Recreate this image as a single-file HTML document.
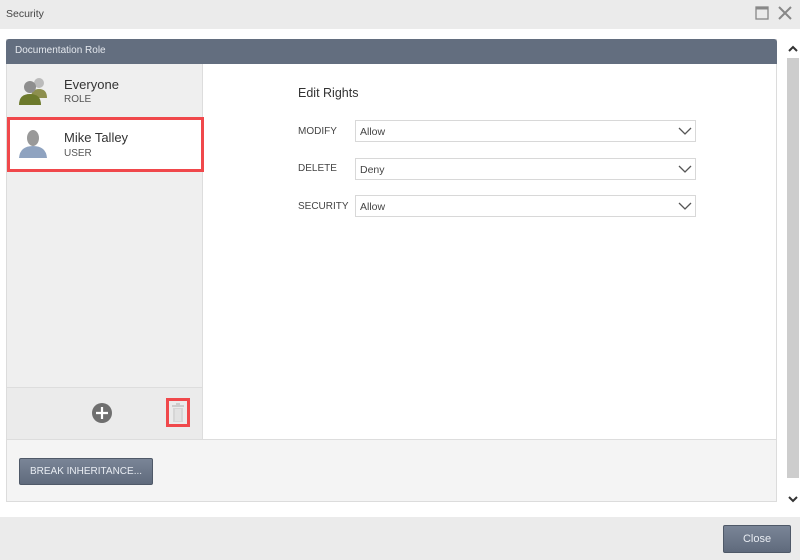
<!DOCTYPE html>
<html><head><style>
*{box-sizing:border-box;margin:0;padding:0}
body{width:800px;height:560px;background:#ebebeb;font-family:"Liberation Sans",sans-serif;position:relative;overflow:hidden;color:#333}
.a{position:absolute}
.sel{position:absolute;left:355px;width:341px;height:22px;border:1px solid #d8d8d8;background:#fff;font-size:10.5px;padding:5px 4px;color:#444}
.sel svg{position:absolute;right:3px;top:5px}
.lbl{position:absolute;left:298px;font-size:10px;color:#444}
</style></head><body>
<div class="a" style="left:6px;top:8px;font-size:10.5px;color:#444">Security</div>
<svg class="a" style="left:755px;top:6px" width="14" height="14"><rect x="1" y="1" width="12" height="12" fill="none" stroke="#888" stroke-width="1.3"/><rect x="1" y="1" width="12" height="2.5" fill="#888"/></svg>
<svg class="a" style="left:777px;top:5px" width="16" height="16"><path d="M2 2L14 14M14 2L2 14" stroke="#888" stroke-width="2"/></svg>
<div class="a" style="left:0;top:29px;width:786px;height:488px;background:#fff"></div>
<div class="a" style="left:786px;top:29px;width:14px;height:488px;background:#fff"></div>
<svg class="a" style="left:786px;top:44px" width="14" height="10"><path d="M3 7L7 3L11 7" stroke="#333" stroke-width="2" fill="none"/></svg>
<div class="a" style="left:787px;top:58px;width:12px;height:420px;background:#cdcdcd"></div>
<svg class="a" style="left:786px;top:494px" width="14" height="10"><path d="M3 3L7 7L11 3" stroke="#333" stroke-width="2" fill="none"/></svg>
<div class="a" style="left:6px;top:39px;width:771px;height:463px;border:1px solid #dcdcdc;background:#f4f4f4"></div>
<div class="a" style="left:6px;top:39px;width:771px;height:25px;background:#636e7f;border-radius:3px 3px 0 0;color:#e4e8ee;font-size:10px;padding:6px 9px">Documentation Role</div>
<div class="a" style="left:7px;top:64px;width:196px;height:376px;background:#efefef;border-right:1px solid #ddd"></div>
<div class="a" style="left:203px;top:64px;width:573px;height:376px;background:#fff;border-bottom:1px solid #ddd"></div>
<div class="a" style="left:7px;top:387px;width:196px;height:53px;background:#ebebeb;border-top:1px solid #ddd;border-bottom:1px solid #ddd;border-right:1px solid #ddd"></div>
<svg class="a" style="left:17px;top:74px" width="34" height="32"><circle cx="22" cy="9" r="5" fill="#bbb"/><path d="M14 24Q14 15 22 15Q30 15 30 24Z" fill="#8d8f4e"/><circle cx="13" cy="13" r="6" fill="#8e8e8e"/><path d="M2 31Q2 20 13 20Q24 20 24 31Z" fill="#6d7a2d"/></svg>
<div class="a" style="left:64px;top:77px;font-size:13px;color:#333">Everyone</div>
<div class="a" style="left:64px;top:94px;font-size:10px;color:#555">ROLE</div>
<div class="a" style="left:7px;top:117px;width:197px;height:55px;background:#fff;border:3px solid #f0484b"></div>
<svg class="a" style="left:18px;top:128px" width="30" height="32"><ellipse cx="15" cy="10" rx="6" ry="8" fill="#999"/><path d="M1 30Q2 18 15 18Q28 18 29 30Z" fill="#8fa3c0"/></svg>
<div class="a" style="left:64px;top:130px;font-size:13px;color:#333">Mike Talley</div>
<div class="a" style="left:64px;top:148px;font-size:10px;color:#555">USER</div>
<svg class="a" style="left:92px;top:403px" width="20" height="20"><circle cx="10" cy="10" r="10" fill="#6f6f6f"/><path d="M10 4V16M4 10H16" stroke="#fff" stroke-width="2.2"/></svg>
<div class="a" style="left:166px;top:398px;width:24px;height:29px;border:3px solid #f0484b"></div>
<svg class="a" style="left:170px;top:402px" width="16" height="22"><rect x="2" y="3" width="12" height="2" fill="#ccc"/><rect x="6" y="1" width="4" height="2" fill="#ccc"/><rect x="3" y="6" width="10" height="14" fill="#d6d6d6"/><path d="M6 7V19M8 7V19M10 7V19" stroke="#eee" stroke-width="1"/></svg>
<div class="a" style="left:298px;top:86px;font-size:12.5px;color:#333">Edit Rights</div>
<div class="lbl" style="top:126px">MODIFY</div>
<div class="sel" style="top:120px">Allow<svg width="14" height="10"><path d="M1 2L7 8L13 2" stroke="#555" stroke-width="1.3" fill="none"/></svg></div>
<div class="lbl" style="top:163px">DELETE</div>
<div class="sel" style="top:158px">Deny<svg width="14" height="10"><path d="M1 2L7 8L13 2" stroke="#555" stroke-width="1.3" fill="none"/></svg></div>
<div class="lbl" style="top:201px">SECURITY</div>
<div class="sel" style="top:195px">Allow<svg width="14" height="10"><path d="M1 2L7 8L13 2" stroke="#555" stroke-width="1.3" fill="none"/></svg></div>
<div class="a" style="left:19px;top:458px;width:134px;height:27px;background:linear-gradient(#7a8597,#5f6a7c);border:1px solid #4f5968;border-radius:2px;color:#e8ecf2;font-size:10px;text-align:center;line-height:25px">BREAK INHERITANCE...</div>
<div class="a" style="left:723px;top:525px;width:68px;height:28px;background:linear-gradient(#7a8597,#5f6a7c);border:1px solid #4f5968;border-radius:2px;color:#e8ecf2;font-size:11px;text-align:center;line-height:26px">Close</div>
</body></html>
